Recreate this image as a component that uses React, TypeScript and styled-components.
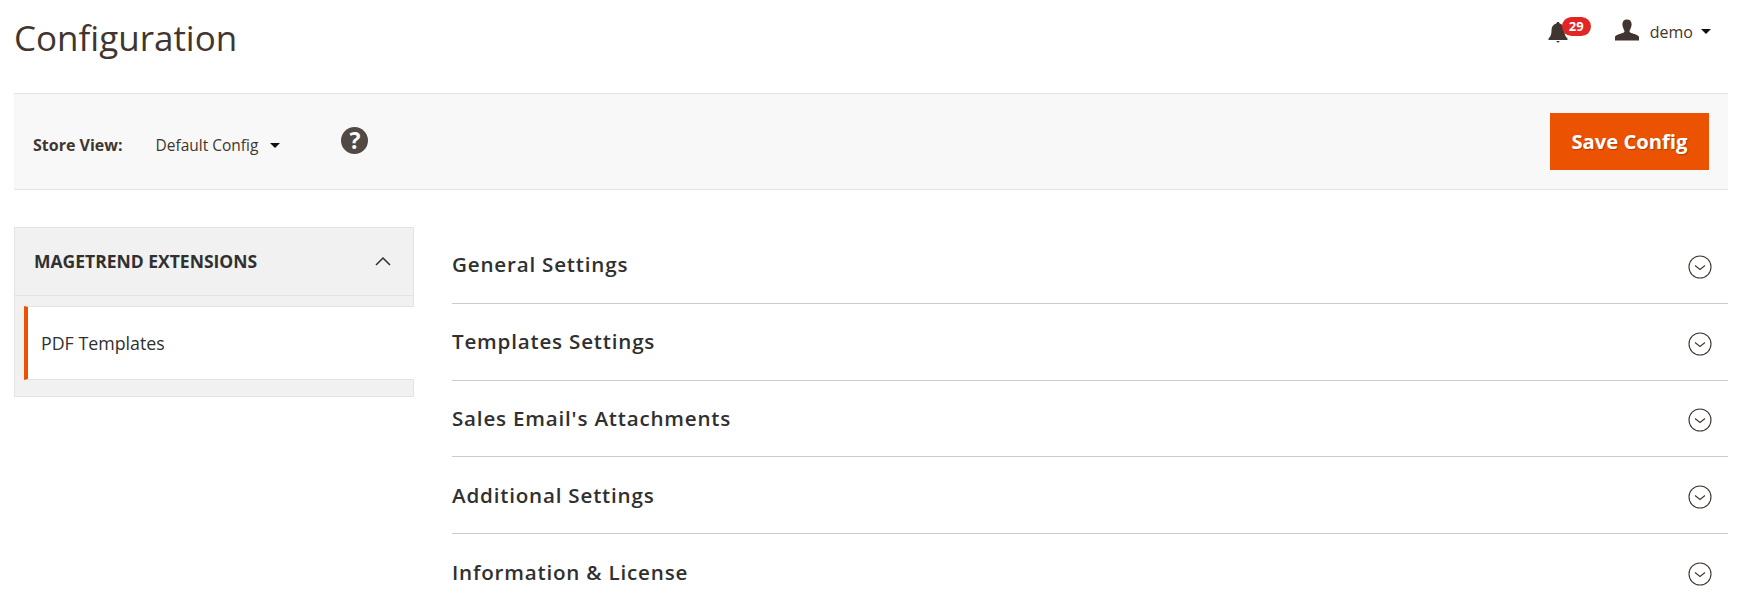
import styled, { createGlobalStyle } from "styled-components";

const GlobalStyle = createGlobalStyle`
  html, body {
    margin: 0;
    padding: 0;
    background: #fff;
    height: 611px;
    overflow: hidden;
    font-family: "Open Sans", "Liberation Sans", sans-serif;
    color: #303030;
  }
`;

const Page = styled.div`
  padding: 0 9px 0 14px;
`;

const Header = styled.header`
  height: 94px;
  display: flex;
  justify-content: space-between;
  box-sizing: border-box;
  border-bottom: 1px solid #e3e3e3;
`;

const Title = styled.h1`
  margin: 15px 0 0 0;
  font-size: 35px;
  line-height: 46px;
  font-weight: 400;
  color: #41362f;
`;

const HeaderActions = styled.div`
  display: flex;
  align-items: flex-start;
  padding: 19px 17px 0 0;
`;

const Bell = styled.div`
  position: relative;
  width: 20px;
  height: 26px;
  margin: 1px 47px 0 0;
  color: #41362f;
`;

const Badge = styled.span`
  position: absolute;
  left: 14px;
  top: -3px;
  width: 29px;
  height: 19px;
  border-radius: 10px;
  background: #e22626;
  color: #fff;
  font-size: 13px;
  font-weight: 700;
  line-height: 19px;
  text-align: center;
`;

const UserName = styled.span`
  margin: 2px 0 0 11px;
  font-size: 16px;
  line-height: 22px;
  color: #41362f;
`;

const Caret = styled.span<{ $left: number }>`
  display: inline-block;
  width: 0;
  height: 0;
  margin-left: ${(p) => p.$left}px;
  border-style: solid;
  border-width: 5px 5px 0;
  border-color: #111 transparent transparent;
`;

const UserCaret = styled(Caret)`
  margin-top: 10px;
`;

const Toolbar = styled.div`
  height: 96px;
  box-sizing: border-box;
  background: #f8f8f8;
  border-bottom: 1px solid #e3e3e3;
  display: flex;
  align-items: center;
  padding: 0 19px 0 19px;
`;

const StoreLabel = styled.span`
  font-size: 16px;
  font-weight: 700;
  color: #41362f;
  margin: 7px 0 0;
`;

const StoreValue = styled.span`
  margin: 7px 0 0 33px;
  font-size: 15.5px;
  color: #41362f;
`;

const ToolbarCaret = styled(Caret)`
  margin-top: 7px;
`;

const Help = styled.span`
  display: block;
  width: 27px;
  height: 27px;
  margin: 0 auto 2px 61px;
  border-radius: 50%;
  background: #514943;
  color: #fff;
  font-size: 23px;
  font-weight: 700;
  line-height: 27px;
  text-align: center;
`;

const SaveButton = styled.button`
  width: 159px;
  height: 57px;
  margin-bottom: 1px;
  border: none;
  background: #eb5202;
  color: #fff;
  font-family: inherit;
  font-size: 20.2px;
  font-weight: 700;
  text-shadow: 1px 1px 1px rgba(0, 0, 0, 0.25);
`;

const Body = styled.div`
  display: flex;
  align-items: flex-start;
  gap: 38px;
  margin-top: 37px;
`;

const Sidebar = styled.aside`
  width: 400px;
  flex: none;
  box-sizing: border-box;
  background: #f1f1f1;
  border: 1px solid #e3e3e3;
  padding-bottom: 16px;
`;

const SidebarHead = styled.div`
  height: 68px;
  box-sizing: border-box;
  display: flex;
  align-items: center;
  justify-content: space-between;
  padding: 0 22px 2px 19px;
  border-bottom: 1px solid #e3e3e3;
  font-size: 17.5px;
  font-weight: 700;
  color: #303030;
`;

const SidebarItem = styled.div`
  margin: 10px -1px 0 9px;
  height: 74px;
  box-sizing: border-box;
  display: flex;
  align-items: center;
  padding-left: 13px;
  background: #fff;
  border-left: 4px solid #eb5202;
  border-top: 1px solid #e3e3e3;
  border-bottom: 1px solid #e3e3e3;
  font-size: 17.8px;
  font-weight: 500;
  color: #303030;
`;

const Sections = styled.div`
  flex: 1;
  min-width: 0;
`;

const Section = styled.div`
  height: 76.75px;
  box-sizing: border-box;
  display: flex;
  align-items: center;
  justify-content: space-between;
  padding: 0 16px 1px 0;
  border-bottom: 1px solid #cccccc;
  font-size: 20.6px;
  font-weight: 600;
  letter-spacing: 0.8px;
  color: #303030;

  &:last-child {
    border-bottom: none;
  }
`;

const IconSlot = styled.span`
  display: block;
  height: 24px;
  margin-top: 5px;
`;

const sections = [
  "General Settings",
  "Templates Settings",
  "Sales Email's Attachments",
  "Additional Settings",
  "Information & License",
];

const BellIcon = () => (
  <svg width="20" height="26" viewBox="0 0 20 26" fill="currentColor">
    <path d="M10 2c1 0 1.6.6 1.7 1.6C15 4.5 16.500 7 16.500 10.500c0 4 .8 6 3 8V20H.5v-1.500c2.200-2 3-4 3-8C3.500 7 5 4.500 8.300 3.600 8.400 2.600 9 2 10 2z" />
    <path d="M8.500 21h3a1.500 1.500 0 0 1-3 0z" />
  </svg>
);

const UserIcon = () => (
  <svg width="24" height="22" viewBox="0 1 26 23" fill="#41362f">
    <path d="M13 1c3.300 0 5 2.200 5 5.300 0 1.200-.2 2-.5 3-.4 1.500-1.200 3-1.700 4-.3 1.200.2 1.900 1.700 2.500 3 1.100 7.500 1.800 8.500 4.200V24H0v-4c1-2.400 5.500-3.100 8.500-4.200 1.500-.6 2-1.300 1.700-2.500-.5-1-1.300-2.500-1.700-4-.3-1-.5-1.800-.5-3C8 3.200 9.700 1 13 1z" />
  </svg>
);

const ChevronUp = () => (
  <svg width="16" height="10" viewBox="0 0 16 10" fill="none" stroke="#303030" strokeWidth="1.500">
    <path d="M1 9l7-7 7 7" />
  </svg>
);

const CircleChevron = () => (
  <svg width="24" height="24" viewBox="0 0 24 24" fill="none" stroke="#41362f" strokeWidth="1.100">
    <circle cx="12" cy="12" r="11" />
    <path d="M7 10.500l5 4 5-4" />
  </svg>
);

export default function App() {
  return (
    <Page>
      <GlobalStyle />
      <Header>
        <Title>Configuration</Title>
        <HeaderActions>
          <Bell>
            <BellIcon />
            <Badge>29</Badge>
          </Bell>
          <UserIcon />
          <UserName>demo</UserName>
          <UserCaret $left={8} />
        </HeaderActions>
      </Header>
      <Toolbar>
        <StoreLabel>Store View:</StoreLabel>
        <StoreValue>Default Config</StoreValue>
        <ToolbarCaret $left={12} />
        <Help>?</Help>
        <SaveButton>Save Config</SaveButton>
      </Toolbar>
      <Body>
        <Sidebar>
          <SidebarHead>
            MAGETREND EXTENSIONS
            <ChevronUp />
          </SidebarHead>
          <SidebarItem>PDF Templates</SidebarItem>
        </Sidebar>
        <Sections>
          {sections.map((name) => (
            <Section key={name}>
              {name}
              <IconSlot>
                <CircleChevron />
              </IconSlot>
            </Section>
          ))}
        </Sections>
      </Body>
    </Page>
  );
}
